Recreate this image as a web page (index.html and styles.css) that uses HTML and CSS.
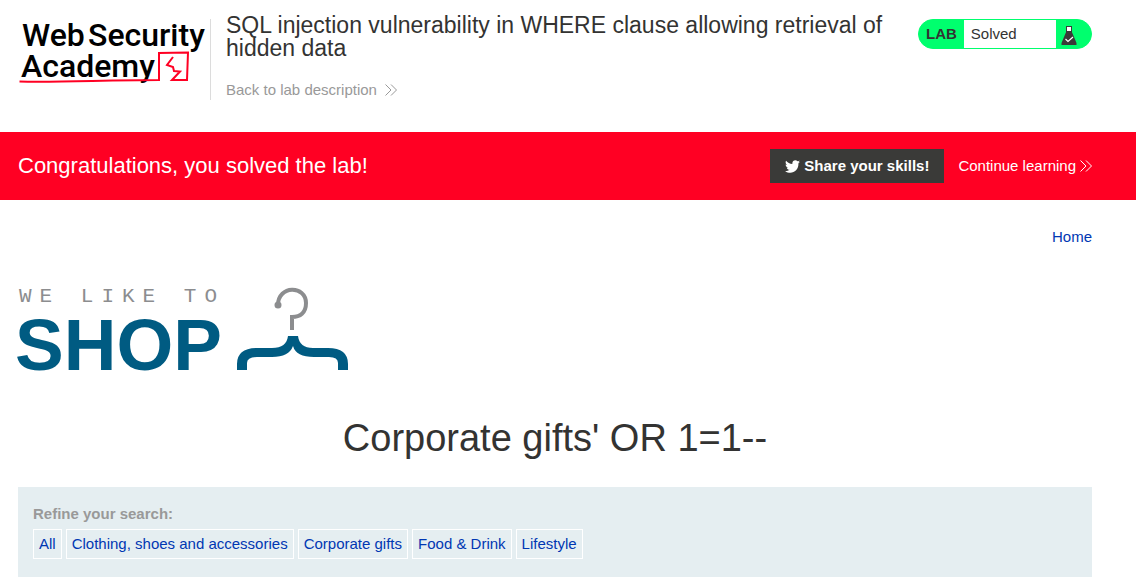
FILE: index.html
```html
<!DOCTYPE html>
<html lang="en">
<head>
<meta charset="utf-8">
<title>SQL injection vulnerability in WHERE clause allowing retrieval of hidden data</title>
<link rel="stylesheet" href="styles.css">
</head>
<body>
<header class="lab-header container">
  <a class="academy-logo" href="#" aria-label="Web Security Academy">
    <svg width="190" height="70" viewBox="18 17 190 70">
      <text class="logo-text" x="22" y="46">Web</text>
      <text class="logo-text" x="88" y="46">Security</text>
      <text class="logo-text" x="21" y="77">Academy</text>
      <path d="M19.500 81.500C60 82.500 105 80 159 80V53L188 52.500L187 80H172L180 71.500L174 71L173 67L167 65L173 57" fill="none" stroke="#ff0023" stroke-width="2"/>
    </svg>
  </a>
  <div class="lab-info">
    <h2 class="lab-title">SQL injection vulnerability in WHERE clause allowing retrieval of hidden data</h2>
    <a class="back-link" href="#">Back to lab description
      <svg width="12" height="12" viewBox="0 0 12 12" fill="none" stroke="currentColor"><path d="M.5 .5L6 6L.5 11.500M6 .5L11.500 6L6 11.500"/></svg>
    </a>
  </div>
  <div class="lab-status">
    <span class="status-label">LAB</span>
    <span class="status-value">Solved</span>
    <svg class="status-icon" width="16" height="20" viewBox="0 0 16 20"><path d="M5 .5H11M5.500 1V7M10.500 1V7" stroke="#3a3a38" fill="none"/><path d="M6 1H10V6H6Z" fill="#fff"/><path d="M5.500 5H10.500L15.500 17V19H.5V17Z" fill="#3a3a38"/><path d="M4.500 13L7 15.500L12 11" stroke="#fff" fill="none" stroke-width="1.200"/></svg>
  </div>
</header>
<section class="banner">
  <div class="banner-inner container">
    <p class="banner-text">Congratulations, you solved the lab!</p>
    <div class="banner-actions">
      <button class="share-button" type="button">
        <svg width="15" height="13" viewBox="0 0 24 20" fill="#fff"><path d="M24 2.400C23 2.800 22.100 3 21.200 3.200C22.200 2.500 22.900 1.600 23.300.5C22.300 1 21.300 1.500 20.200 1.700C16.800-1.800 11 .7 11.800 6C7.700 5.800 4.100 3.800 1.700.9C.4 3.100 1 6 3.200 7.500C2.400 7.500 1.600 7.200.9 6.900C1 9.200 2.600 11.200 4.900 11.800C4.200 12 3.400 12 2.700 11.900C3.300 13.800 5.100 15.300 7.300 15.300C5.300 16.900 2.600 17.700 0 17.400C10.500 24 22 17.500 21.500 4.900C22.500 4.200 23.300 3.400 24 2.400Z"/></svg>
        Share your skills!
      </button>
      <a class="continue-link" href="#">Continue learning
        <svg width="12" height="12" viewBox="0 0 12 12" fill="none" stroke="currentColor"><path d="M.5 .5L6 6L.5 11.500M6 .5L11.500 6L6 11.500"/></svg>
      </a>
    </div>
  </div>
</section>
<main class="container">
  <nav class="top-links"><a href="#">Home</a></nav>
  <svg class="shop-logo" width="332" height="84" viewBox="17 287 332 84" role="img" aria-label="We like to shop">
    <text class="shop-small" x="19" y="302">WE LIKE TO</text>
    <text class="shop-big" x="15" y="370">SHOP</text>
    <path d="M278 305C278 285 306 285 306 303C306 313 300 317 292 317V330" fill="none" stroke="#8c8d8f" stroke-width="4"/>
    <circle cx="278" cy="305" r="3.500" fill="#8c8d8f"/>
    <path d="M288 336H298C299 344 304 348 313 348H328Q348 348 348 364V370H338V363Q338 357 329 357H314Q296 357 293 346Q289 357 272 357H257Q247 357 247 363V370H237V364Q237 348 257 348H272C282 348 287 344 288 336Z" fill="#005b82"/>
  </svg>
  <h1 class="page-title">Corporate gifts' OR 1=1--</h1>
  <section class="search-filters">
    <p class="filter-label">Refine your search:</p>
    <nav class="filter-list">
      <a href="#">All</a>
      <a href="#">Clothing, shoes and accessories</a>
      <a href="#">Corporate gifts</a>
      <a href="#">Food &amp; Drink</a>
      <a href="#">Lifestyle</a>
    </nav>
  </section>
</main>
</body>
</html>
```
FILE: styles.css
```css
* { box-sizing: border-box; }
body {
  margin: 0;
  background: #fff;
  color: #333332;
  font-family: "Liberation Sans", Arial, sans-serif;
  font-size: 15px;
  line-height: 18px;
}
h1, h2, p { margin: 0; font-weight: 400; }
a { text-decoration: none; color: #0037b3; }
.container { padding-left: 18px; padding-right: 44px; }
.lab-header {
  display: flex;
  align-items: flex-start;
  padding-top: 19px;
  padding-bottom: 32px;
}
.academy-logo {
  flex: none;
  height: 81px;
  padding-right: 2px;
  border-right: 1px solid #dcdcdc;
}
.academy-logo svg { display: block; overflow: visible; margin-top: -2px; }
.logo-text { font-family: Roboto, sans-serif; font-size: 32px; font-weight: 500; fill: #000; }
.lab-info { flex: 1; margin: -5px 30px 0 15px; }
.lab-title { font-size: 23px; line-height: 23px; }
.back-link {
  display: inline-flex;
  align-items: center;
  gap: 8px;
  margin-top: 21px;
  color: #999;
}
.lab-status {
  flex: none;
  display: flex;
  align-items: center;
  width: 174px;
  height: 30px;
  border: 1px solid #00ff6e;
  border-radius: 15px;
  background: #00ff6e;
}
.status-label { padding: 0 7px; font-weight: 700; }
.status-value {
  flex: 1;
  padding: 0 7px;
  background: #fff;
  line-height: 28px;
}
.status-icon { margin: 3px 14px 0 5px; }
.banner { background: #ff0023; color: #fff; }
.banner-inner {
  display: flex;
  align-items: center;
  justify-content: space-between;
  padding-top: 17px;
  padding-bottom: 17px;
}
.banner-text { font-size: 22px; line-height: 26px; }
.banner-actions { display: flex; align-items: center; gap: 14px; }
.share-button {
  display: flex;
  align-items: center;
  gap: 4px;
  height: 34px;
  padding: 0 15px;
  border: 0;
  background: #3a3a38;
  color: #fff;
  font: inherit;
  font-weight: 700;
}
.continue-link { display: flex; align-items: center; gap: 4px; color: #fff; }
.top-links { padding-top: 28px; text-align: right; }
.shop-logo { display: block; overflow: visible; margin: 41px 0 0 -1px; }
.shop-small { font-family: "Courier New", "Liberation Mono", monospace; font-size: 21px; letter-spacing: 8px; fill: #8c8d8f; }
.shop-big { font-size: 73px; font-weight: 700; fill: #005b82; }
.page-title { margin-top: 44px; font-size: 38px; line-height: 46px; text-align: center; }
.search-filters { margin-top: 26px; padding: 18px 15px; background: #e5eef1; }
.filter-label { color: #999; font-weight: 700; }
.filter-list { display: flex; flex-wrap: wrap; gap: 4px; margin-top: 6px; }
.filter-list a { padding: 5px; border: 1px solid #fff; }
```
